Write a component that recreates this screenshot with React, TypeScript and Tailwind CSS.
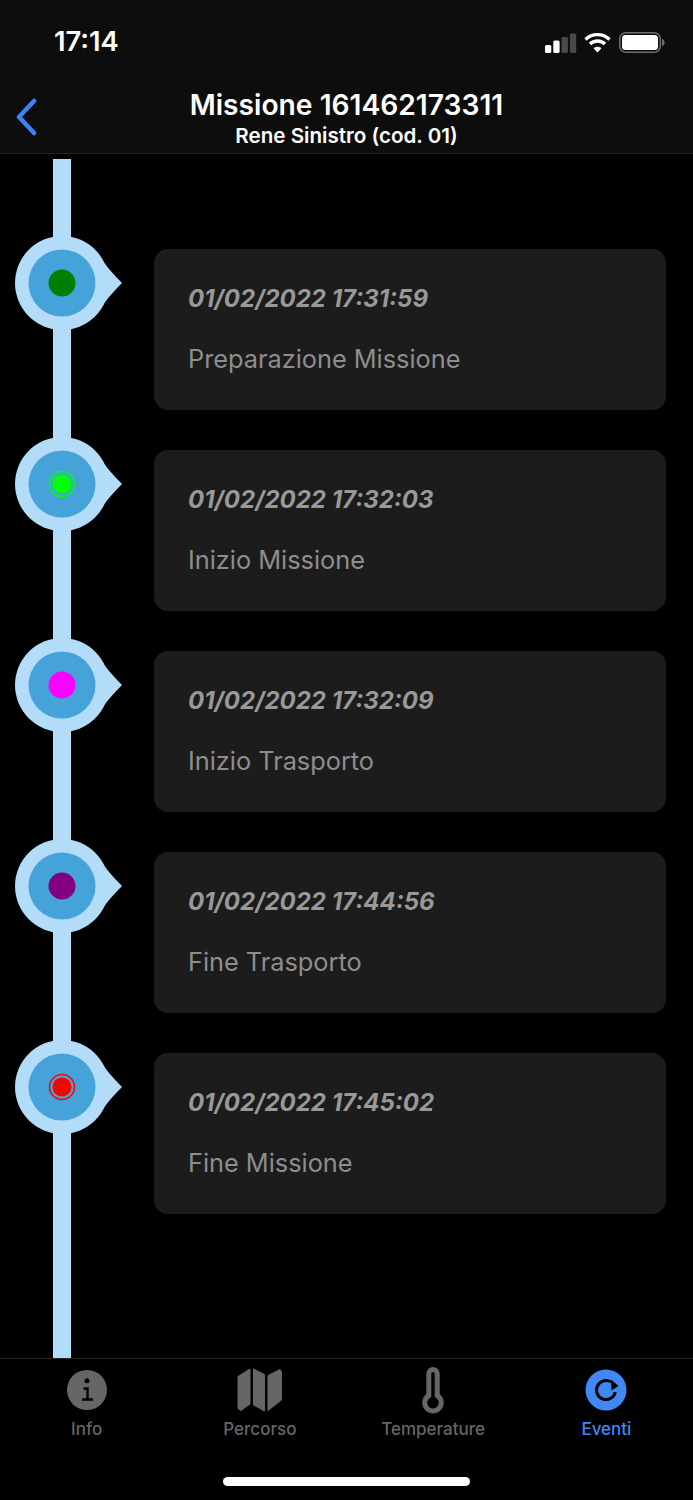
const font = { fontFamily: "Inter, 'Liberation Sans', sans-serif" };

const events = [
  { time: "01/02/2022 17:31:59", label: "Preparazione Missione", color: "#008000", ring: false },
  { time: "01/02/2022 17:32:03", label: "Inizio Missione", color: "#00ff00", ring: true },
  { time: "01/02/2022 17:32:09", label: "Inizio Trasporto", color: "#ff00ff", ring: false },
  { time: "01/02/2022 17:44:56", label: "Fine Trasporto", color: "#800080", ring: false },
  { time: "01/02/2022 17:45:02", label: "Fine Missione", color: "#ff0000", ring: true },
];

function Marker({ color, ring }: { color: string; ring: boolean }) {
  return (
    <svg width="107" height="94" viewBox="0 0 107 94" className="shrink-0">
      <circle cx="47" cy="47" r="47" fill="#b3dcf9" />
      <path d="M86 22 Q92 32 107 47 Q92 62 86 72 Z" fill="#b3dcf9" />
      <circle cx="47" cy="47" r="33.5" fill="#45a3da" />
      {ring ? (
        <>
          <circle cx="47" cy="47" r="9.5" fill={color} />
          <circle cx="47" cy="47" r="12.5" fill="none" stroke={color} strokeWidth="1.5" />
        </>
      ) : (
        <circle cx="47" cy="47" r="13.5" fill={color} />
      )}
    </svg>
  );
}

function StatusIcons() {
  return (
    <div className="flex items-center">
      <svg width="32" height="20" viewBox="0 0 32 20">
        <rect x="0" y="12" width="6.3" height="8" rx="1.5" fill="#fff" />
        <rect x="8.3" y="7.5" width="6.3" height="12.5" rx="1.5" fill="#fff" />
        <rect x="16.6" y="4" width="6.3" height="16" rx="1.5" fill="#4a4a4a" />
        <rect x="24.9" y="0.5" width="6.3" height="19.5" rx="1.5" fill="#4a4a4a" />
      </svg>
      <svg width="27" height="21" viewBox="0 0 27 21" fill="none" stroke="#fff" strokeWidth="3.4" className="ml-[7px]">
        <path d="M1.5 7.5 C8 1 19 1 25.5 7.5" />
        <path d="M6 12 C10 8 17 8 21 12" />
        <path d="M13.5 20.5 L9.6 16.3 C11.8 14.3 15.2 14.3 17.4 16.3 Z" fill="#fff" stroke="none" />
      </svg>
      <svg width="46" height="21" viewBox="0 0 46 21" className="ml-[8px]">
        <rect x="0.75" y="0.75" width="40.5" height="19.5" rx="6" fill="none" stroke="#6e6e6e" strokeWidth="1.5" />
        <rect x="3" y="3" width="36" height="15" rx="3.5" fill="#fff" />
        <path d="M43 7 C45 7.5 45.5 9 45.5 10.5 C45.5 12 45 13.5 43 14 Z" fill="#6e6e6e" />
      </svg>
    </div>
  );
}

function InfoIcon() {
  return (
    <svg width="40" height="40" viewBox="0 0 40 40">
      <circle cx="20" cy="20" r="20" fill="#666" />
      <circle cx="20" cy="10.7" r="2.5" fill="#000" />
      <path d="M16.500 18.500 H20.500 V29.500 M15 29.500 H26" fill="none" stroke="#000" strokeWidth="2.400" />
    </svg>
  );
}

function MapIcon() {
  return (
    <svg width="46" height="46" viewBox="0 0 46 46" fill="#666" stroke="#666" strokeWidth="1" strokeLinejoin="round">
      <path d="M1 9.500 L13 2 V37 L4 43.500 L1 41.500 Z" />
      <path d="M16.500 2 L27.500 7.500 V44 L16.500 38 Z" />
      <path d="M31 8.500 L43 2.500 L44.500 4.500 V33 L31 43.500 Z" />
    </svg>
  );
}

function ThermometerIcon() {
  return (
    <svg width="24" height="48" viewBox="0 0 24 48">
      <path
        d="M7.800 29.500 V7.700 A4.200 4.200 0 0 1 16.200 7.700 V29.500 A8.300 8.300 0 1 1 7.800 29.500 Z"
        fill="none"
        stroke="#666"
        strokeWidth="5"
      />
    </svg>
  );
}

function RefreshIcon() {
  return (
    <svg width="42" height="42" viewBox="0 0 42 42">
      <circle cx="21" cy="21" r="20.500" fill="#3f88f6" />
      <path d="M30.300 23 A9.500 9.500 0 1 1 26 13" fill="none" stroke="#000" strokeWidth="3" />
      <path d="M26 10.500 L33.500 17 L26.500 21.500 Z" fill="#000" />
    </svg>
  );
}

const tabs = [
  { label: "Info", icon: <InfoIcon />, active: false },
  { label: "Percorso", icon: <MapIcon />, active: false },
  { label: "Temperature", icon: <ThermometerIcon />, active: false },
  { label: "Eventi", icon: <RefreshIcon />, active: true },
];

export default function App() {
  return (
    <div className="flex h-[1500px] w-[693px] flex-col overflow-hidden bg-black" style={font}>
      {/* Status bar + nav */}
      <header className="h-[154px] shrink-0 border-b border-[#222] bg-[#0d0d0d]">
        <div className="flex h-[84px] items-start justify-between pl-[54px] pr-[28px] pt-[26px]">
          <span className="text-[27.300px] leading-[32px] font-semibold text-white">17:14</span>
          <div className="pt-[6px]">
            <StatusIcons />
          </div>
        </div>
        <div className="relative flex flex-col items-center pt-[1px]">
          <svg
            width="24"
            height="38"
            viewBox="0 0 24 38"
            fill="none"
            stroke="#3b82f6"
            strokeWidth="4.500"
            strokeLinecap="round"
            strokeLinejoin="round"
            className="absolute left-[15px] top-[14px]"
          >
            <path d="M19 3 L4 19 L19 35" />
          </svg>
          <h1 className="text-[28.200px] leading-[40px] font-semibold text-white">Missione 161462173311</h1>
          <p className="-mt-[2px] text-[20.600px] leading-[26px] font-semibold text-white">Rene Sinistro (cod. 01)</p>
        </div>
      </header>

      {/* Timeline */}
      <main className="relative flex-1 pt-[95px]">
        <div className="absolute bottom-0 left-[53px] top-[5px] w-[18px] bg-[#b3dcf9]" />
        <div className="relative flex flex-col gap-[40px]">
          {events.map((ev) => (
            <div key={ev.time} className="flex items-start pl-[15px] pr-[27px]">
              <div className="-mt-[13px] w-[139px] shrink-0">
                <Marker color={ev.color} ring={ev.ring} />
              </div>
              <div className="flex h-[161px] flex-1 flex-col rounded-[14px] bg-[#1c1c1c] pl-[34px] pt-[35px]">
                <span className="text-[24px] leading-[30px] font-bold italic text-[#999]">{ev.time}</span>
                <span className="mt-[29px] text-[25.300px] leading-[32px] text-[#8e8e8e]">{ev.label}</span>
              </div>
            </div>
          ))}
        </div>
      </main>

      {/* Tab bar */}
      <footer className="relative h-[142px] shrink-0 border-t border-[#222] bg-black">
        <nav className="grid grid-cols-4">
          {tabs.map((tab) => (
            <div key={tab.label} className="flex flex-col items-center">
              <div className="flex h-[62px] items-center justify-center">{tab.icon}</div>
              <span
                className={`-mt-[3px] text-[17px] leading-[22px] font-medium ${
                  tab.active ? "text-[#3f88f6]" : "text-[#666]"
                }`}
              >
                {tab.label}
              </span>
            </div>
          ))}
        </nav>
        <div className="absolute bottom-[14px] left-[223px] h-[9px] w-[247px] rounded-full bg-white" />
      </footer>
    </div>
  );
}
